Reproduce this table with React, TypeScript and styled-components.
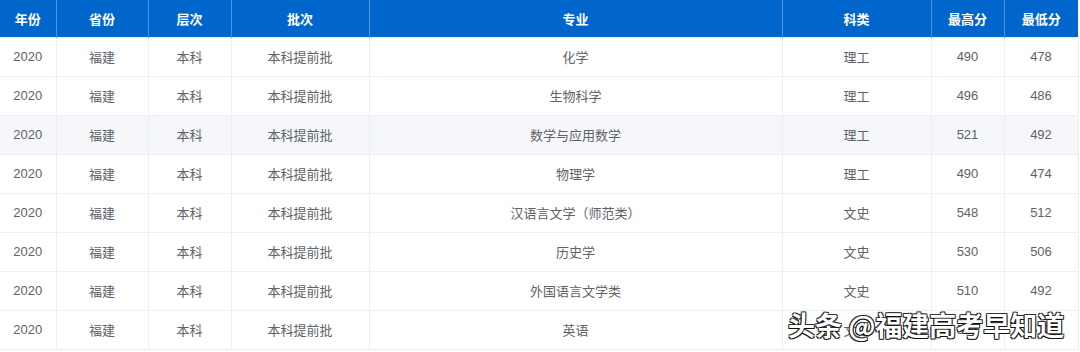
import React from "react";
import styled, { createGlobalStyle } from "styled-components";

const GlobalStyle = createGlobalStyle`
  body {
    margin: 0;
    background: #ffffff;
    font-family: "Liberation Sans", "Noto Sans CJK SC", sans-serif;
  }
`;

interface Row {
  year: string;
  province: string;
  level: string;
  batch: string;
  major: string;
  subject: string;
  max: number;
  min: number;
}

const rows: Row[] = [
  { year: "2020", province: "福建", level: "本科", batch: "本科提前批", major: "化学", subject: "理工", max: 490, min: 478 },
  { year: "2020", province: "福建", level: "本科", batch: "本科提前批", major: "生物科学", subject: "理工", max: 496, min: 486 },
  { year: "2020", province: "福建", level: "本科", batch: "本科提前批", major: "数学与应用数学", subject: "理工", max: 521, min: 492 },
  { year: "2020", province: "福建", level: "本科", batch: "本科提前批", major: "物理学", subject: "理工", max: 490, min: 474 },
  { year: "2020", province: "福建", level: "本科", batch: "本科提前批", major: "汉语言文学（师范类）", subject: "文史", max: 548, min: 512 },
  { year: "2020", province: "福建", level: "本科", batch: "本科提前批", major: "历史学", subject: "文史", max: 530, min: 506 },
  { year: "2020", province: "福建", level: "本科", batch: "本科提前批", major: "外国语言文学类", subject: "文史", max: 510, min: 492 },
  { year: "2020", province: "福建", level: "本科", batch: "本科提前批", major: "英语", subject: "文史", max: 537, min: 517 },
];

const widths = [56, 92, 83, 138, 413, 149, 73, 74];
const headers = ["年份", "省份", "层次", "批次", "专业", "科类", "最高分", "最低分"];

const Wrapper = styled.div`
  position: relative;
  width: 1080px;
  height: 352px;
  overflow: hidden;
`;

const Table = styled.table`
  width: 1078px;
  table-layout: fixed;
  border-collapse: collapse;
  font-family: "Liberation Sans", "Noto Sans CJK SC", sans-serif;
  font-size: 13px;
`;

const HeadCell = styled.th`
  height: 37px;
  padding: 0;
  background: #0066cc;
  color: #ffffff;
  font-weight: 700;
  text-align: center;
  border-left: 1px solid #4d94db;
  &:first-child {
    border-left: none;
  }
`;

const BodyRow = styled.tr<{ $active?: boolean }>`
  height: 39px;
  background: ${(p) => (p.$active ? "#f5f7fa" : "#ffffff")};
`;

const Cell = styled.td`
  padding: 0 0 2px;
  color: #606266;
  text-align: center;
  border: 1px solid #ebeef5;
  &:first-child {
    border-left: none;
  }
`;

const Watermark = styled.div`
  position: absolute;
  left: 788px;
  top: 308px;
  font-family: "Noto Sans CJK SC", sans-serif;
  font-size: 27px;
  font-weight: 700;
  line-height: 34px;
  color: #ffffff;
  white-space: nowrap;
  text-shadow: -1px 1px 0 #111, 1px 1px 0 #222, -1px -1px 0 #333, 1px -1px 0 #333;
`;

export default function App() {
  return (
    <Wrapper>
      <GlobalStyle />
      <Table>
        <colgroup>
          {widths.map((w, i) => (
            <col key={i} style={{ width: w }} />
          ))}
        </colgroup>
        <thead>
          <tr>
            {headers.map((h) => (
              <HeadCell key={h}>{h}</HeadCell>
            ))}
          </tr>
        </thead>
        <tbody>
          {rows.map((r, i) => (
            <BodyRow key={i} $active={i === 2}>
              <Cell>{r.year}</Cell>
              <Cell>{r.province}</Cell>
              <Cell>{r.level}</Cell>
              <Cell>{r.batch}</Cell>
              <Cell>{r.major}</Cell>
              <Cell>{r.subject}</Cell>
              <Cell>{r.max}</Cell>
              <Cell>{r.min}</Cell>
            </BodyRow>
          ))}
        </tbody>
      </Table>
      <Watermark>头条 @福建高考早知道</Watermark>
    </Wrapper>
  );
}
